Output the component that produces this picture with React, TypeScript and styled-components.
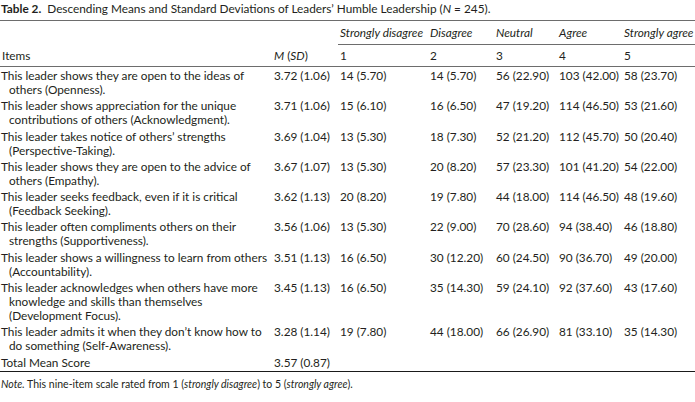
import styled, { createGlobalStyle } from 'styled-components';

const GlobalStyle = createGlobalStyle`
  html, body {
    margin: 0;
    padding: 0;
    background: #ffffff;
  }
  body {
    font-family: Lato, "Open Sans", "Liberation Sans", sans-serif;
    color: #231f20;
  }
`;

type Row = {
  item: string;
  mean: string;
  counts: string[];
};

const rows: Row[] = [
  {
    item: 'This leader shows they are open to the ideas of others (Openness).',
    mean: '3.72 (1.06)',
    counts: ['14 (5.70)', '14 (5.70)', '56 (22.90)', '103 (42.00)', '58 (23.70)']
  },
  {
    item: 'This leader shows appreciation for the unique contributions of others (Acknowledgment).',
    mean: '3.71 (1.06)',
    counts: ['15 (6.10)', '16 (6.50)', '47 (19.20)', '114 (46.50)', '53 (21.60)']
  },
  {
    item: 'This leader takes notice of others’ strengths (Perspective-Taking).',
    mean: '3.69 (1.04)',
    counts: ['13 (5.30)', '18 (7.30)', '52 (21.20)', '112 (45.70)', '50 (20.40)']
  },
  {
    item: 'This leader shows they are open to the advice of others (Empathy).',
    mean: '3.67 (1.07)',
    counts: ['13 (5.30)', '20 (8.20)', '57 (23.30)', '101 (41.20)', '54 (22.00)']
  },
  {
    item: 'This leader seeks feedback, even if it is critical (Feedback Seeking).',
    mean: '3.62 (1.13)',
    counts: ['20 (8.20)', '19 (7.80)', '44 (18.00)', '114 (46.50)', '48 (19.60)']
  },
  {
    item: 'This leader often compliments others on their strengths (Supportiveness).',
    mean: '3.56 (1.06)',
    counts: ['13 (5.30)', '22 (9.00)', '70 (28.60)', '94 (38.40)', '46 (18.80)']
  },
  {
    item: 'This leader shows a willingness to learn from others (Accountability).',
    mean: '3.51 (1.13)',
    counts: ['16 (6.50)', '30 (12.20)', '60 (24.50)', '90 (36.70)', '49 (20.00)']
  },
  {
    item: 'This leader acknowledges when others have more knowledge and skills than themselves (Development Focus).',
    mean: '3.45 (1.13)',
    counts: ['16 (6.50)', '35 (14.30)', '59 (24.10)', '92 (37.60)', '43 (17.60)']
  },
  {
    item: 'This leader admits it when they don’t know how to do something (Self-Awareness).',
    mean: '3.28 (1.14)',
    counts: ['19 (7.80)', '44 (18.00)', '66 (26.90)', '81 (33.10)', '35 (14.30)']
  }
];

const scale = ['Strongly disagree', 'Disagree', 'Neutral', 'Agree', 'Strongly agree'];
const colWidths = [272, 66, 90, 66, 63, 65, 73];

export default function App() {
  return (
    <Page>
      <GlobalStyle/>
      <Caption>
        <strong>Table 2.</strong>{'  '}Descending Means and Standard Deviations of Leaders’ Humble Leadership (<i>N</i>{' = '}245).
      </Caption>
      <Table>
        <colgroup>
          {colWidths.map((w, i) => <Col key={i} $width={w}/>)}
        </colgroup>
        <thead>
          <tr>
            <HeadCell/>
            <HeadCell/>
            {scale.map(label => (
              <HeadCell key={label} $ruled>
                <i>{label}</i>
              </HeadCell>
            ))}
          </tr>
          <tr>
            <SubHeadCell>Items</SubHeadCell>
            <SubHeadCell><i>M</i> (<i>SD</i>)</SubHeadCell>
            {['1', '2', '3', '4', '5'].map(n => <SubHeadCell key={n}>{n}</SubHeadCell>)}
          </tr>
        </thead>
        <tbody>
          {rows.map((row, r) => (
            <tr key={row.mean + row.item}>
              <ItemCell $first={r === 0}>{row.item}</ItemCell>
              <Cell $first={r === 0}>{row.mean}</Cell>
              {row.counts.map((c, i) => <Cell key={i} $first={r === 0}>{c}</Cell>)}
            </tr>
          ))}
          <tr>
            <ItemCell $last>Total Mean Score</ItemCell>
            <Cell $last>3.57 (0.87)</Cell>
            {[0, 1, 2, 3, 4].map(i => <Cell key={i} $last/>)}
          </tr>
        </tbody>
      </Table>
      <Note>
        <i>Note.</i> This nine-item scale rated from 1 (<i>strongly disagree</i>) to 5 (<i>strongly agree</i>).
      </Note>
    </Page>
  );
}

const Page = styled.div`
    width: 695px;
    padding-top: 2px;
    font-size: 11.8px;
    line-height: 14px;
    overflow: hidden;
  `,
  Caption = styled.div`
    white-space: pre;
    padding-left: 1px;
    padding-bottom: 4px;
    border-bottom: 1px solid #6d6d6d;
    strong {
      font-weight: 700;
    }
  `,
  Table = styled.table`
    width: 695px;
    border-collapse: collapse;
    table-layout: fixed;
  `,
  Col = styled.col<{ $width: number }>`
    width: ${p => p.$width}px;
  `,
  HeadCell = styled.th<{ $ruled?: boolean }>`
    text-align: left;
    font-weight: 400;
    padding: 5px 0 4px 2px;
    white-space: nowrap;
    border-bottom: ${p => p.$ruled ? '1px solid #6d6d6d' : 'none'};
  `,
  SubHeadCell = styled.th`
    text-align: left;
    font-weight: 400;
    padding: 4px 0 3px 2px;
    white-space: nowrap;
    border-bottom: 1px solid #6d6d6d;
  `,
  Cell = styled.td<{ $last?: boolean; $first?: boolean }>`
    vertical-align: top;
    padding: ${p => p.$first ? '2px' : '1px'} 0 1.3px 2px;
    white-space: nowrap;
    border-bottom: ${p => p.$last ? '1px solid #1a1a1a' : 'none'};
  `,
  ItemCell = styled(Cell)`
    padding-left: 9px;
    padding-right: 2px;
    text-indent: -8px;
    white-space: normal;
  `,
  Note = styled.div`
    padding: 5px 0 0 1px;
    font-size: 10.5px;
  `;
